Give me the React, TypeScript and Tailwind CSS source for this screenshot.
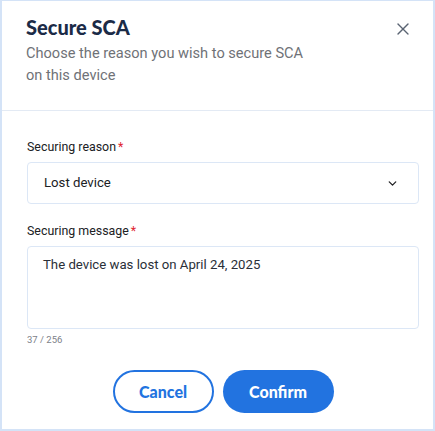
import { ChevronDown, X } from "lucide-react";

export default function App() {
  return (
    <div className="flex h-[431px] w-[435px] flex-col border border-l-2 border-r-2 border-b-2 border-[#d4e3f7] bg-white font-['Roboto',sans-serif]">
      <div className="relative border-b border-[#e3eaf4] px-[24px] pb-[24px] pt-[14px]">
        <h1 className="font-['Lato',sans-serif] text-[20px] font-black leading-[24px] text-[#1b2b47]">
          Secure SCA
        </h1>
        <p className="mt-[3px] w-[290px] text-[14.6px] leading-[22px] text-[#6f7277]">
          Choose the reason you wish to secure SCA on this device
        </p>
        <button className="absolute right-[20px] top-[18px] text-[#5a6473]" aria-label="Close">
          <X className="h-[20px] w-[20px]" strokeWidth={1.6} />
        </button>
      </div>

      <div className="flex flex-1 flex-col pl-[25px] pr-[14px] pt-[27px]">
        <label className="flex h-[18px] items-center text-[12.4px] text-[#202124]">
          Securing reason<span className="ml-[2px] text-[#e0252f]">*</span>
        </label>
        <div className="mt-[6px] flex h-[42px] items-center justify-between rounded-[4px] border border-[#dce7f6] pl-[16px] pr-[19px] text-[13.2px] text-[#202124]">
          <span>Lost device</span>
          <ChevronDown className="h-[13px] w-[13px] text-[#202124]" strokeWidth={2.4} />
        </div>

        <label className="mt-[18px] flex h-[18px] items-center text-[12.4px] text-[#202124]">
          Securing message<span className="ml-[2px] text-[#e0252f]">*</span>
        </label>
        <div className="mt-[6px] h-[83px] rounded-[4px] border border-[#dce7f6] px-[15px] pt-[8px] text-[13.2px] leading-[20px] text-[#2a2f38]">
          The device was lost on April 24, 2025
        </div>
        <div className="mt-[5px] text-[9.5px] leading-[12px] text-[#7d8189]">37 / 256</div>

        <div className="mt-[24px] flex justify-center gap-[9px]">
          <button className="flex h-[43px] w-[101px] items-center justify-center rounded-full border-2 border-[#2273e0] font-['Lato',sans-serif] text-[16px] font-black text-[#2273e0]">
            Cancel
          </button>
          <button className="flex h-[43px] w-[111px] items-center justify-center rounded-full bg-[#2273e0] font-['Lato',sans-serif] text-[16px] font-black text-white">
            Confirm
          </button>
        </div>
      </div>
    </div>
  );
}
